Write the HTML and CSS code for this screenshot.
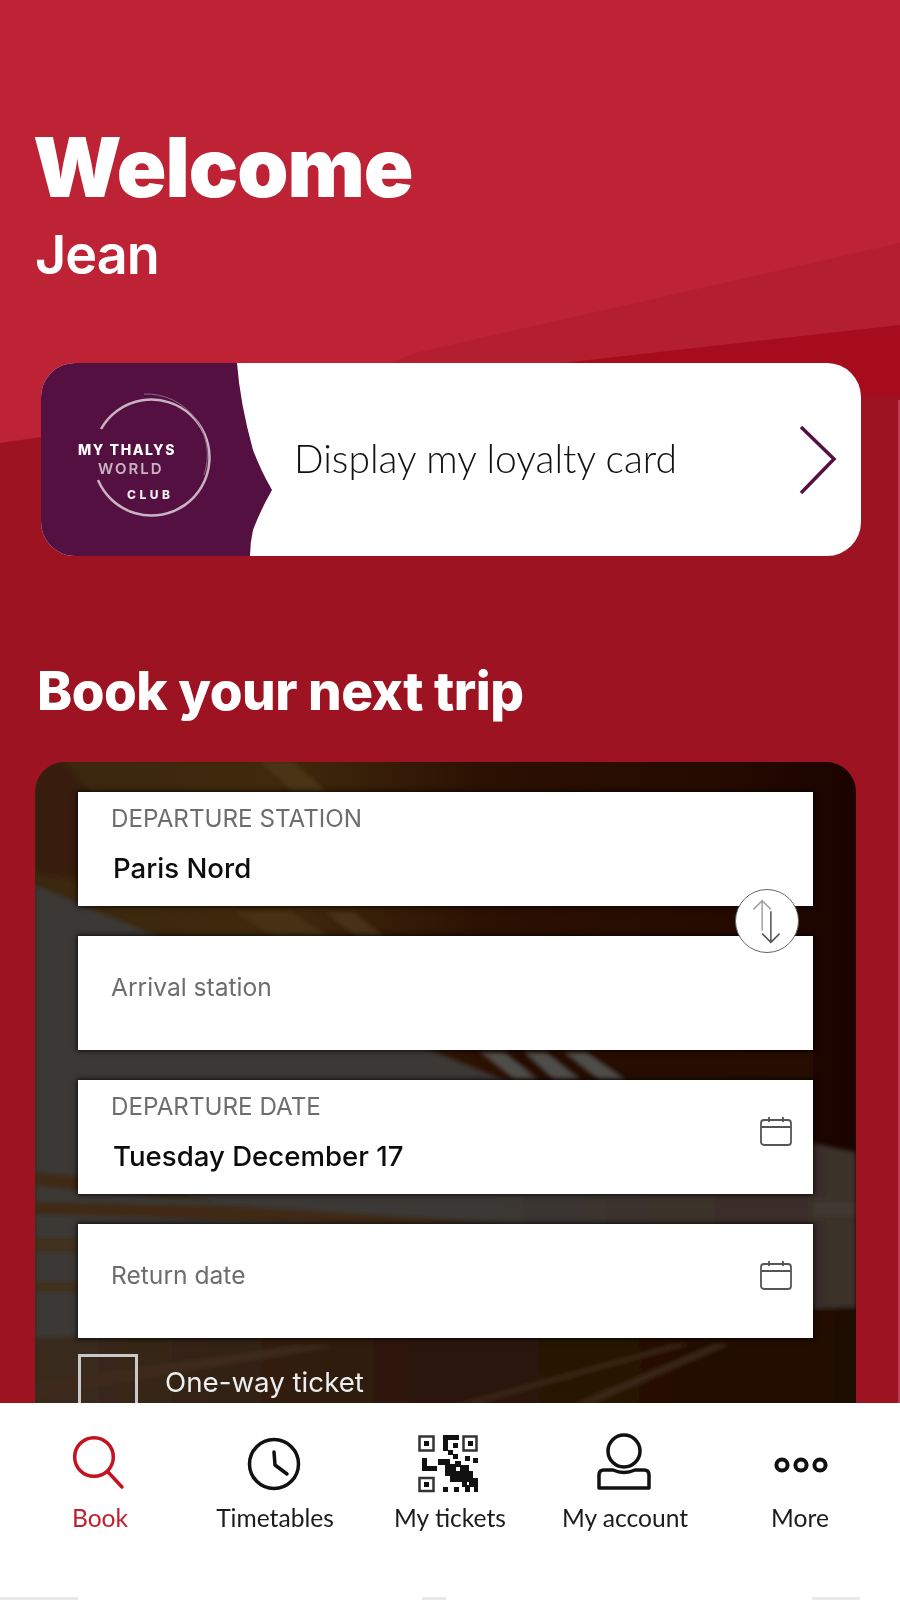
FILE: index.html
```html
<!DOCTYPE html>
<html lang="en">
<head>
<meta charset="utf-8">
<title>Thalys – Book</title>
<link rel="stylesheet" href="styles.css">
</head>
<body>
<div class="app">
  <main class="home">
    <svg class="backdrop" viewBox="0 0 900 1403" preserveAspectRatio="none" aria-hidden="true">
      <polygon class="band-one" points="900,243 415,353 300,400 900,400"/>
      <polygon class="band-two" points="900,325 580,361 300,400 900,400"/>
      <polygon class="band-base" points="0,443 300,400 900,396 900,1403 0,1403"/>
      <rect class="band-edge" x="898" y="400" width="2" height="1003"/>
    </svg>

    <header class="greeting">
      <h1 class="welcome">Welcome</h1>
      <p class="name">Jean</p>
    </header>

    <a class="loyalty">
      <svg class="club" viewBox="0 0 235 193" role="img" aria-label="My Thalys World Club">
        <path class="club-shape" d="M0 0H196Q199 40 212 87Q220 108 231 127Q220 146 212 167Q209 180 209 193H0Z"/>
        <path class="club-ring" d="M60 66A58 58 0 1 1 57 117"/>
        <path class="club-ring-thin" d="M103 31A61 61 0 0 1 163 112"/>
        <text class="club-top" x="37" y="92">MY THALYS</text>
        <text class="club-mid" x="57" y="111">WORLD</text>
        <text class="club-low" x="86" y="136">CLUB</text>
      </svg>
      <span class="loyalty-text">Display my loyalty card</span>
      <svg class="chevron" viewBox="0 0 38 68" aria-hidden="true"><path d="M2 1L35 33L2 67"/></svg>
    </a>

    <h2 class="book-title">Book your next trip</h2>

    <section class="form">
      <svg class="photo" viewBox="0 0 821 700" preserveAspectRatio="none" aria-hidden="true">
        <defs>
          <linearGradient id="base" x1="0" x2="1" y1="0" y2="0">
            <stop offset="0" stop-color="#3a280f"/>
            <stop offset=".3" stop-color="#40290c"/>
            <stop offset=".55" stop-color="#2c1002"/>
            <stop offset=".85" stop-color="#240a00"/>
            <stop offset="1" stop-color="#1a0300"/>
          </linearGradient>
          <linearGradient id="grey" x1="0" x2="1" y1="0" y2="0">
            <stop offset="0" stop-color="#3a3935"/>
            <stop offset=".55" stop-color="#3a3834"/>
            <stop offset=".85" stop-color="#3a2f29"/>
            <stop offset="1" stop-color="#3a302a"/>
          </linearGradient>
          <linearGradient id="floor" x1="0" x2="1" y1="0" y2="0">
            <stop offset="0" stop-color="#3a2c1e"/>
            <stop offset=".4" stop-color="#2e1a0c"/>
            <stop offset=".8" stop-color="#241002"/>
            <stop offset="1" stop-color="#1f0b02"/>
          </linearGradient>
          <filter id="soft" x="-5%" y="-5%" width="110%" height="110%"><feGaussianBlur stdDeviation="2"/></filter>
        </defs>
        <rect width="821" height="700" fill="url(#base)"/>
        <g filter="url(#soft)">
          <polygon points="226,0 258,0 292,30 258,30" fill="#4a3413"/>
          <polygon points="0,0 30,0 60,40 60,120 0,110" fill="#391e08"/>
          <polygon points="0,123 112,170 400,290 470,318 821,390 821,590 0,590" fill="url(#grey)"/>
          <polygon points="200,150 255,150 295,175 240,175" fill="#463212"/>
          <polygon points="290,150 318,150 350,175 322,175" fill="#463212"/>
          <polygon points="440,290 778,290 778,318 520,318" fill="#260e02"/>
          <polygon points="445,290 468,290 503,318 480,318" fill="#4f4d48"/>
          <polygon points="490,290 510,290 545,318 520,318" fill="#4f4d48"/>
          <polygon points="530,290 550,290 590,318 565,318" fill="#4f4d48"/>
          <polygon points="0,410 90,418 180,440 0,424" fill="#3f2c15"/>
          <polygon points="0,440 200,444 480,462 300,462 0,452" fill="#3f2c15"/>
          <rect x="0" y="476" width="43" height="14" fill="#40301f"/>
          <rect x="0" y="520" width="43" height="10" fill="#40301f"/>
          <rect x="778" y="440" width="43" height="14" fill="#423731"/>
          <polygon points="0,576 821,545 821,700 0,700" fill="url(#floor)"/>
          <polygon points="0,620 260,584 300,584 0,636" fill="#3c2c1c"/>
          <polygon points="425,641 640,582 655,582 445,641" fill="#3a2818"/>
          <polygon points="540,641 680,582 695,582 560,641" fill="#3a2818"/>
        </g>
      </svg>

      <div class="fields">
        <div class="field">
          <div class="field-body">
            <span class="caption caption-caps">DEPARTURE STATION</span>
            <span class="value">Paris Nord</span>
          </div>
        </div>
        <div class="field">
          <div class="field-body field-empty">
            <span class="caption">Arrival station</span>
          </div>
        </div>
        <div class="field">
          <div class="field-body">
            <span class="caption caption-caps">DEPARTURE DATE</span>
            <span class="value">Tuesday December 17</span>
          </div>
          <svg class="calendar" viewBox="0 0 34 32" aria-hidden="true">
            <rect x="2" y="5" width="30" height="25" rx="3"/>
            <path d="M2 12H32M10 2V7M24 2V7"/>
          </svg>
        </div>
        <div class="field">
          <div class="field-body field-empty">
            <span class="caption">Return date</span>
          </div>
          <svg class="calendar" viewBox="0 0 34 32" aria-hidden="true">
            <rect x="2" y="5" width="30" height="25" rx="3"/>
            <path d="M2 12H32M10 2V7M24 2V7"/>
          </svg>
        </div>
      </div>

      <button class="swap" type="button" aria-label="Swap stations">
        <svg viewBox="0 0 64 64" aria-hidden="true">
          <path class="swap-up" d="M27 42V11M18 20L27 11L36 20"/>
          <path class="swap-down" d="M36 22V54M27 45L36 54L45 45"/>
        </svg>
      </button>

      <label class="one-way">
        <span class="checkbox"></span>
        <span class="one-way-text">One-way ticket</span>
      </label>
    </section>
  </main>

  <nav class="tabs">
    <a class="tab tab-active">
      <svg class="tab-icon" viewBox="0 0 64 64" aria-hidden="true">
        <circle cx="26" cy="26" r="19.3"/><path d="M40 41L54 56"/>
      </svg>
      <span>Book</span>
    </a>
    <a class="tab">
      <svg class="tab-icon" viewBox="0 0 64 64" aria-hidden="true">
        <circle cx="31" cy="33" r="24.5"/><path d="M31 21L32 34L44 43"/>
      </svg>
      <span>Timetables</span>
    </a>
    <a class="tab">
      <svg class="tab-icon qr" viewBox="0 0 64 64" aria-hidden="true">
        <g transform="translate(0 4)">
          <rect class="qr-frame" x="1.5" y="1.5" width="14" height="14"/>
          <rect x="6" y="6" width="5" height="5"/>
          <rect class="qr-frame" x="45.5" y="1.5" width="13" height="14"/>
          <rect x="50" y="6" width="5" height="5"/>
          <rect class="qr-frame" x="1.5" y="43" width="14" height="13"/>
          <rect x="6" y="47" width="5" height="5"/>
          <path d="M25 0H41V5H30V16H25ZM35 8H40V13H35Z"/>
          <path d="M4 23H9V31H19V36H4Z"/>
          <path d="M20 24H32V30H20ZM30 15H35V20H30ZM35 19H40V24H35ZM47 21H52V26H47ZM55 23H60V28H55Z"/>
          <path d="M27 29H38V41H27ZM37 26H43V32H37ZM32 36H44V47H32ZM42 30H51V38H42ZM43 38H51V47H43ZM50 36H55V44H50ZM51 43H60V52H51ZM36 52H41V57H36ZM47 50H52V57H47ZM25 52H30V57H25ZM56 52H60V57H56ZM44 46H49V52H44Z"/>
        </g>
      </svg>
      <span>My tickets</span>
    </a>
    <a class="tab">
      <svg class="tab-icon" viewBox="0 0 64 64" aria-hidden="true">
        <circle cx="31" cy="20" r="16"/>
        <path d="M6 57V44Q6 39 11 39H20Q31 44 42 39H51Q56 39 56 44V57Z"/>
      </svg>
      <span>My account</span>
    </a>
    <a class="tab tab-more">
      <svg class="tab-icon" viewBox="0 0 64 64" aria-hidden="true">
        <circle cx="14" cy="34" r="5.6"/><circle cx="33" cy="34" r="5.6"/><circle cx="52" cy="34" r="5.6"/>
      </svg>
      <span>More</span>
    </a>
  </nav>
</div>
</body>
</html>
```

FILE: styles.css
```css
* { box-sizing: border-box; }

html, body {
  margin: 0;
  padding: 0;
  background: #fff;
}

.app {
  width: 900px;
  height: 1600px;
  display: flex;
  flex-direction: column;
  overflow: hidden;
  filter: blur(.6px);
}

.home {
  position: relative;
  height: 1403px;
  flex: none;
  overflow: hidden;
  background: #bd2335;
}

.backdrop {
  position: absolute;
  inset: 0;
  width: 900px;
  height: 1403px;
}
.band-one { fill: #b31f2f; }
.band-two { fill: #a60c1c; }
.band-base { fill: #9d1321; }
.band-edge { fill: #b8404e; }

.greeting {
  position: relative;
  padding: 118px 0 0 33px;
  color: #fff;
  font-family: Inter, "Liberation Sans", sans-serif;
}
.welcome {
  margin: 0;
  font-size: 82px;
  font-weight: 900;
  line-height: 100px;
  letter-spacing: -1px;
}
.name {
  margin: 5px 0 0 2px;
  font-size: 54px;
  font-weight: 600;
  line-height: 64px;
  letter-spacing: -1px;
}

.loyalty {
  position: relative;
  display: flex;
  align-items: center;
  width: 820px;
  height: 193px;
  margin: 76px 0 0 41px;
  border-radius: 34px;
  background: #fff;
  overflow: hidden;
}
.club {
  flex: none;
  width: 235px;
  height: 193px;
}
.club-shape { fill: #551042; }
.club-ring { fill: none; stroke: #c9b3c2; stroke-width: 2.5; }
.club-ring-thin { fill: none; stroke: #8d6a84; stroke-width: 1; }
.club-top, .club-mid, .club-low {
  font-family: Inter, "Liberation Sans", sans-serif;
  font-weight: 800;
}
.club-top { font-size: 14px; fill: #fff; letter-spacing: 1.6px; }
.club-mid { font-size: 15px; fill: #c9b3c2; font-weight: 600; letter-spacing: 2px; }
.club-low { font-size: 12px; fill: #eee; letter-spacing: 3.5px; }

.loyalty-text {
  flex: 1;
  margin: -4px 0 0 18px;
  font-family: Lato, "Liberation Sans", sans-serif;
  font-size: 39px;
  font-weight: 300;
  color: #111;
}
.chevron {
  flex: none;
  width: 38px;
  height: 68px;
  margin: 0 24px 0 0;
  fill: none;
  stroke: #551042;
  stroke-width: 3.5;
}

.book-title {
  position: relative;
  margin: 100px 0 0 37px;
  font-family: Inter, "Liberation Sans", sans-serif;
  font-size: 53px;
  font-weight: 800;
  line-height: 70px;
  letter-spacing: -.5px;
  color: #fff;
}

.form {
  position: relative;
  width: 821px;
  height: 700px;
  margin: 36px 0 0 35px;
  padding: 30px 43px 0;
  border-radius: 30px;
  overflow: hidden;
  font-family: Inter, "Liberation Sans", sans-serif;
}
.photo {
  position: absolute;
  inset: 0;
  width: 100%;
  height: 100%;
}

.fields {
  position: relative;
  display: flex;
  flex-direction: column;
  gap: 30px;
}
.field {
  display: flex;
  justify-content: space-between;
  align-items: flex-start;
  height: 114px;
  padding-left: 33px;
  background: #fff;
  box-shadow: 0 0 5px 1px rgba(0, 0, 0, .75);
}
.field-body {
  display: flex;
  flex-direction: column;
  padding-top: 12px;
}
.field-empty { padding-top: 36px; }
.caption {
  font-size: 24.6px;
  line-height: 30px;
  color: #6d6d6d;
}
.caption-caps { font-size: 24.2px; }
.value {
  margin: 17px 0 0 2px;
  font-size: 27.6px;
  font-weight: 500;
  line-height: 34px;
  color: #0c0c0c;
}
.calendar {
  flex: none;
  width: 34px;
  height: 32px;
  margin: 35px 20px 0 0;
  fill: none;
  stroke: #555;
  stroke-width: 1.8;
}

.swap {
  position: absolute;
  top: 127px;
  right: 57px;
  width: 64px;
  height: 64px;
  padding: 0;
  border: 1.5px solid #666;
  border-radius: 50%;
  background: #fff;
}
.swap svg {
  display: block;
  width: 100%;
  height: 100%;
  fill: none;
  stroke-width: 1.6;
}
.swap-up { stroke: #a5a5a5; }
.swap-down { stroke: #555; }

.one-way {
  position: relative;
  display: flex;
  align-items: flex-start;
  gap: 27px;
  margin-top: 16px;
}
.checkbox {
  flex: none;
  width: 60px;
  height: 60px;
  border: 3px solid #c9c9c9;
}
.one-way-text {
  margin-top: 11px;
  font-size: 27.7px;
  line-height: 34px;
  color: #eee;
}

.tabs {
  flex: none;
  display: grid;
  grid-template-columns: repeat(5, 1fr);
  height: 197px;
  padding: 28px 12.5px 0;
  background:
    linear-gradient(#e9e9e9, #e9e9e9) 0 100% / 78px 3px no-repeat,
    linear-gradient(#e9e9e9, #e9e9e9) 422px 100% / 24px 3px no-repeat,
    linear-gradient(#e9e9e9, #e9e9e9) 812px 100% / 48px 3px no-repeat,
    #fff;
  font-family: Lato, "Liberation Sans", sans-serif;
  font-size: 24.6px;
  line-height: 28px;
  color: #1c1c1c;
}
.tab {
  display: flex;
  flex-direction: column;
  align-items: center;
  gap: 9px;
}
.tab-icon {
  display: block;
  width: 64px;
  height: 64px;
  fill: none;
  stroke: #111;
  stroke-width: 3.5;
  stroke-linecap: round;
  stroke-linejoin: round;
}
.tab-more .tab-icon { stroke-width: 4; }
.tab-active { color: #c2202f; }
.tab-active .tab-icon { stroke: #c4121f; }

.qr { fill: #111; stroke: none; }
.qr .qr-frame { fill: none; stroke: #333; stroke-width: 2.5; stroke-linejoin: miter; }
```
